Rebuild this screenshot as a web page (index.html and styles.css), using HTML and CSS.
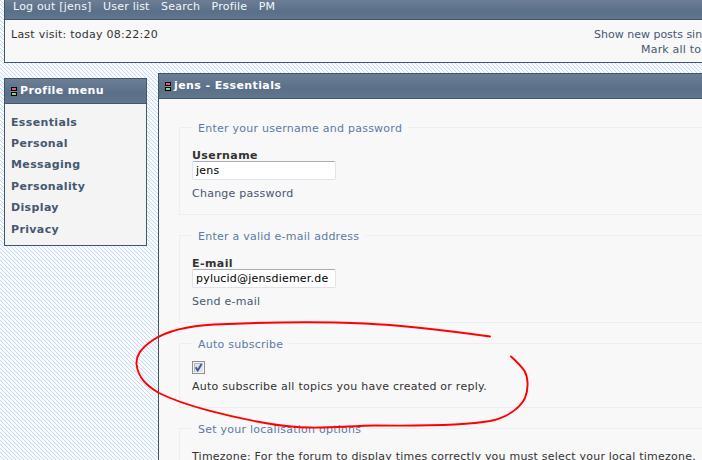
FILE: index.html
```html
<!DOCTYPE html>
<html lang="en">
<head>
<meta charset="utf-8">
<title>jens - Essentials</title>
<link rel="stylesheet" href="styles.css">
</head>
<body>
<div class="page">
<header class="panel top">
  <nav class="bar nav"><a>Log out [jens]</a><a>User list</a><a>Search</a><a>Profile</a><a>PM</a></nav>
  <div class="visit">
    <p class="last">Last visit: today 08:22:20</p>
    <div class="links"><a class="show">Show new posts sin</a><a class="mark">Mark all to</a></div>
  </div>
</header>
<div class="columns">
  <aside class="panel side">
    <h2 class="bar"><i class="mark-icon"></i><span>Profile menu</span></h2>
    <ul class="menu">
      <li><a>Essentials</a></li><li><a>Personal</a></li><li><a>Messaging</a></li><li><a>Personality</a></li><li><a>Display</a></li><li><a>Privacy</a></li>
    </ul>
  </aside>
  <main class="panel main">
    <h2 class="bar"><i class="mark-icon"></i><span>jens - Essentials</span></h2>
    <form class="form">
      <fieldset class="account">
        <legend>Enter your username and password</legend>
        <label>Username</label>
        <input type="text" value="jens">
        <a class="action">Change password</a>
      </fieldset>
      <fieldset class="account">
        <legend>Enter a valid e-mail address</legend>
        <label>E-mail</label>
        <input type="text" value="pylucid@jensdiemer.de">
        <a class="action">Send e-mail</a>
      </fieldset>
      <fieldset class="subscribe">
        <legend>Auto subscribe</legend>
        <svg class="check" width="13" height="13" viewBox="0 0 13 13"><path fill="#8e8f8f" d="M0 0h13v13H0z"/><path fill="#f4f4f4" d="M1 1h11v11H1z"/><path fill="#b6bbc2" d="M2 2h9v9H2z"/><path fill="#dfe2e7" d="M3 3h8v8H3z"/><path d="M3.700 6.200l2 3.200L9.600 3" fill="none" stroke="#3f5997" stroke-width="1.900"/></svg>
        <p>Auto subscribe all topics you have created or reply.</p>
      </fieldset>
      <fieldset class="local">
        <legend>Set your localisation options</legend>
        <p>Timezone: For the forum to display times correctly you must select your local timezone.</p>
      </fieldset>
    </form>
  </main>
</div>
</div>
<svg class="annotation" width="702" height="460" viewBox="0 0 702 460"><path d="M490 336.500C450 331 410 325.500 365 323.500C330 322 270 322 214 324.500C185 326 167 331 153 340C140 349 136 356 136.500 364C138 378 147 386 159 393C185 406 230 417 268 423.500C310 431 340 426 375 425.500C420 426 463 426 490 421C508 417 520 408 525 398C529 388 528 377 524.500 371C521 366 516 361 511 356.500"/></svg>
</body>
</html>
```

FILE: styles.css
```css
* { box-sizing: border-box; }
body {
  margin: 0;
  font: 11px/15px "DejaVu Sans", Verdana, sans-serif;
  letter-spacing: .25px;
  color: #333;
}
.page {
  width: 702px;
  height: 460px;
  overflow: hidden;
  padding-left: 4px;
  background:
    conic-gradient(from 270deg at 1px 1px, #c8daf1 90deg, transparent 0) 0 0 / 4px 4px,
    conic-gradient(from 270deg at 1px 1px, #c8daf1 90deg, transparent 0) 1px 1px / 4px 4px,
    conic-gradient(from 270deg at 1px 1px, #c8daf1 90deg, transparent 0) 2px 2px / 4px 4px,
    conic-gradient(from 270deg at 1px 1px, #c8daf1 90deg, transparent 0) 3px 3px / 4px 4px,
    #f7faff;
}
p, h2, ul { margin: 0; padding: 0; }
a { color: #465770; white-space: nowrap; }
.panel { border: 1px solid #40566f; background: #f8f8f8; }
.bar {
  display: flex;
  align-items: center;
  height: 25px;
  padding-bottom: 2px;
  border-bottom: 1px solid #40566f;
  background: linear-gradient(#6c7e96, #5a7088 60%, #62768d);
  color: #fff;
  font-size: 11px;
  line-height: 15px;
  letter-spacing: .4px;
}
.top { width: 698px; height: 63px; border-width: 0 0 1px 1px; }
.nav { height: 20px; padding: 0 0 6px 8px; gap: 11.500px; letter-spacing: .2px; }
.nav a { color: #f4f6f8; }
.visit { display: flex; padding: 7px 0 0 6px; }
.last { width: 583px; flex: none; }
.links { display: flex; flex-direction: column; width: 108px; letter-spacing: 0; }
.mark { margin-left: 47px; letter-spacing: .2px; }
.columns { display: flex; align-items: flex-start; gap: 11px; margin-top: 10px; }
.side { width: 143px; height: 168px; flex: none; margin-top: 5px; background: #f4f4f4; }
.mark-icon {
  flex: none;
  width: 6px;
  height: 9px;
  margin: 2px 3px 0 6px;
  background:
    linear-gradient(#f06090, #e04080) 1px 1px / 4px 2px no-repeat,
    linear-gradient(#a0d890, #80c070) 1px 6px / 4px 2px no-repeat,
    linear-gradient(#000 0 4px, #8592a3 4px 5px, #000 5px);
}
.menu { list-style: none; padding: 9.700px 6px; font-weight: bold; letter-spacing: .36px; }
.menu li { height: 21.400px; line-height: 17px; }
.main { flex: 1; height: 387px; border-width: 1px 0 0 1px; overflow: hidden; }
.form { padding: 21px 0 0 20px; }
fieldset { min-width: 0; margin: 0 0 13px; padding: 0 0 0 12px; border: 1px solid #eee; border-right: 0; }
legend { height: 15px; padding: 0 6px; color: #5c7ba4; line-height: 17px; white-space: nowrap; }
.account { height: 95px; }
.subscribe { height: 72px; }
.local { height: 39px; border-bottom: 0; }
label { display: block; height: 13px; margin-top: 13px; font-weight: bold; line-height: 15px; letter-spacing: .42px; }
input {
  display: block;
  width: 144px;
  height: 19px;
  margin: 0;
  padding: 0 3px;
  border: 1px solid #e2e3ea;
  border-top-color: #abadb3;
  border-radius: 2px;
  background: #fff;
  color: #000;
  font: inherit;
  letter-spacing: .2px;
}
.action { display: block; margin-top: 6px; }
.check { display: block; margin-top: 10px; }
.subscribe p { margin-top: 5px; }
.local p { margin-top: 13px; white-space: nowrap; letter-spacing: .22px; }
.annotation { position: absolute; left: 0; top: 0; }
.annotation path { fill: none; stroke: #f00; stroke-width: 1.900; stroke-linecap: round; stroke-linejoin: round; }
```
